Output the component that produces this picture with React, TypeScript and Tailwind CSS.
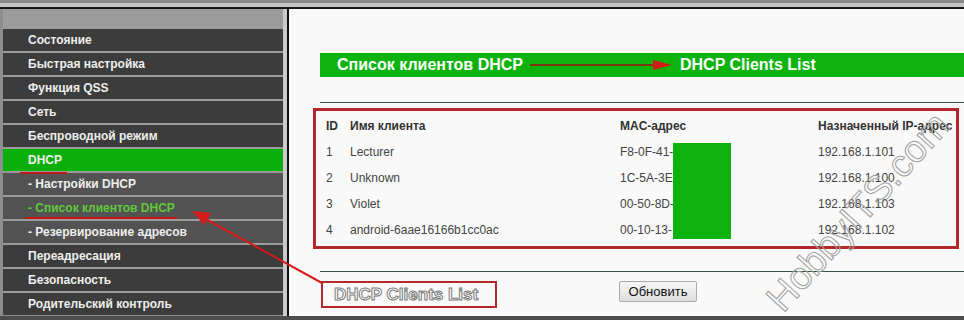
import React from "react";

const mainItems1 = ["Состояние", "Быстрая настройка", "Функция QSS", "Сеть", "Беспроводной режим"];
const mainItems2 = ["Переадресация", "Безопасность", "Родительский контроль"];

const rows = [
  { id: "1", name: "Lecturer", mac: "F8-0F-41-", ip: "192.168.1.101" },
  { id: "2", name: "Unknown", mac: "1C-5A-3E", ip: "192.168.1.100" },
  { id: "3", name: "Violet", mac: "00-50-8D-", ip: "192.168.1.103" },
  { id: "4", name: "android-6aae16166b1cc0ac", mac: "00-10-13-", ip: "192.168.1.102" },
];

function Item({ label, variant }: { label: string; variant: "main" | "sub" | "active" | "subActive" }) {
  const bg =
    variant === "active" ? "bg-[#0aaf0a]" : variant === "main" ? "bg-[#3c3c3c]" : "bg-[#535353]";
  const color = variant === "subActive" ? "text-[#5fc83a]" : "text-[#eeeeee]";
  return (
    <div className={`h-[22px] flex items-center pl-[25px] text-[12px] font-bold ${bg} ${color}`}>{label}</div>
  );
}

export default function App() {
  return (
    <div className="relative w-[964px] h-[320px] overflow-hidden bg-[#f9f9f9] font-['Liberation_Sans',Arial,sans-serif]">
      <div className="h-[3px] bg-[#8a8a8a]" />
      <div className="h-[4px] bg-[#c4c4c4]" />
      <div className="h-[2px] bg-[#151515]" />
      <div className="flex h-[307px]">
        <div className="w-[283px] shrink-0 bg-[#8e8e8e] pl-[3px] flex flex-col">
          <div className="h-[20px] bg-[#9c9c9c]" />
          <div className="flex flex-col gap-[2px] bg-[#9a9a9a]">
            {mainItems1.map((l) => (
              <Item key={l} label={l} variant="main" />
            ))}
            <Item label="DHCP" variant="active" />
            <Item label="- Настройки DHCP" variant="sub" />
            <Item label="- Список клиентов DHCP" variant="subActive" />
            <Item label="- Резервирование адресов" variant="sub" />
            {mainItems2.map((l) => (
              <Item key={l} label={l} variant="main" />
            ))}
          </div>
        </div>
        <div className="w-[4px] shrink-0 bg-[#cacaca]" />
        <div className="w-[2px] shrink-0 bg-[#111111]" />
        <div className="flex-1 overflow-hidden bg-[#f9f9f9] pl-[31px] pt-[44px]">
          <div className="w-[676px]">
            <div className="h-[24px] bg-[#0db30d] flex items-center pl-[17px] text-white font-bold text-[16px]">
              <span className="w-[343px] shrink-0">Список клиентов DHCP</span>
              <span>DHCP Clients List</span>
            </div>
            <div className="mt-[25px] border-t-[1.5px] border-[#36543f]" />
            <div className="relative mt-[10px] text-[12px]">
              <div className="grid grid-cols-[24px_270px_198px_1fr] pl-[6px] h-[26px] items-center font-bold text-[#333333]">
                <span>ID</span>
                <span>Имя клиента</span>
                <span>MAC-адрес</span>
                <span>Назначенный IP-адрес</span>
              </div>
              {rows.map((r) => (
                <div
                  key={r.id}
                  className="grid grid-cols-[24px_270px_198px_1fr] pl-[6px] h-[26px] items-center text-[#444444]"
                >
                  <span>{r.id}</span>
                  <span>{r.name}</span>
                  <span>{r.mac}</span>
                  <span>{r.ip}</span>
                </div>
              ))}
            </div>
            <div className="mt-[28px] border-t-[1.5px] border-[#36543f]" />
            <div className="mt-[9px] flex justify-center">
              <button className="h-[21px] w-[78px] rounded-[2px] border border-[#a9a9a9] bg-gradient-to-b from-[#f6f6f6] to-[#dedede] text-[13px] text-[#111111] font-['Liberation_Sans',Arial,sans-serif]">
                Обновить
              </button>
            </div>
          </div>
        </div>
      </div>
      <div className="h-[4px] bg-[#4d4d4d]" />

      {/* annotations */}
      <div className="absolute left-[673px] top-[143px] w-[58px] h-[96px] bg-[#0db30d]" />
      <div className="absolute left-[313px] top-[108px] w-[646px] h-[141px] border-[3px] border-[#b3282b]" />
      <div className="absolute left-[321px] top-[281px] w-[176px] h-[27px] border-[2px] border-[#b3282b] flex items-center pl-[11px]">
        <span className="text-[17px] font-bold text-white [-webkit-text-stroke:1px_#7a7a7a]">
          DHCP Clients List
        </span>
      </div>
      <svg className="absolute left-0 top-0 pointer-events-none" width="964" height="320" viewBox="0 0 964 320">
        <line x1="20" y1="173" x2="67" y2="173" stroke="#c41414" strokeWidth="2" />
        <line x1="25" y1="218" x2="177" y2="218" stroke="#c41414" strokeWidth="2" />
        <line x1="322" y1="283" x2="204" y2="218" stroke="#d41a1a" strokeWidth="2" />
        <polygon points="192,211 211,213 204,225" fill="#d41a1a" />
        <line x1="530" y1="65" x2="656" y2="65" stroke="#7d3410" strokeWidth="2" />
        <polygon points="672,65 653,60 653,70" fill="#d41a1a" />
      </svg>
      <div className="absolute left-[858px] top-[212px] -translate-x-1/2 -translate-y-1/2 -rotate-[48deg] whitespace-nowrap pointer-events-none text-[38px] text-transparent [-webkit-text-stroke:1px_#a0a0a0]">
        HobbyITS.com
      </div>
    </div>
  );
}
